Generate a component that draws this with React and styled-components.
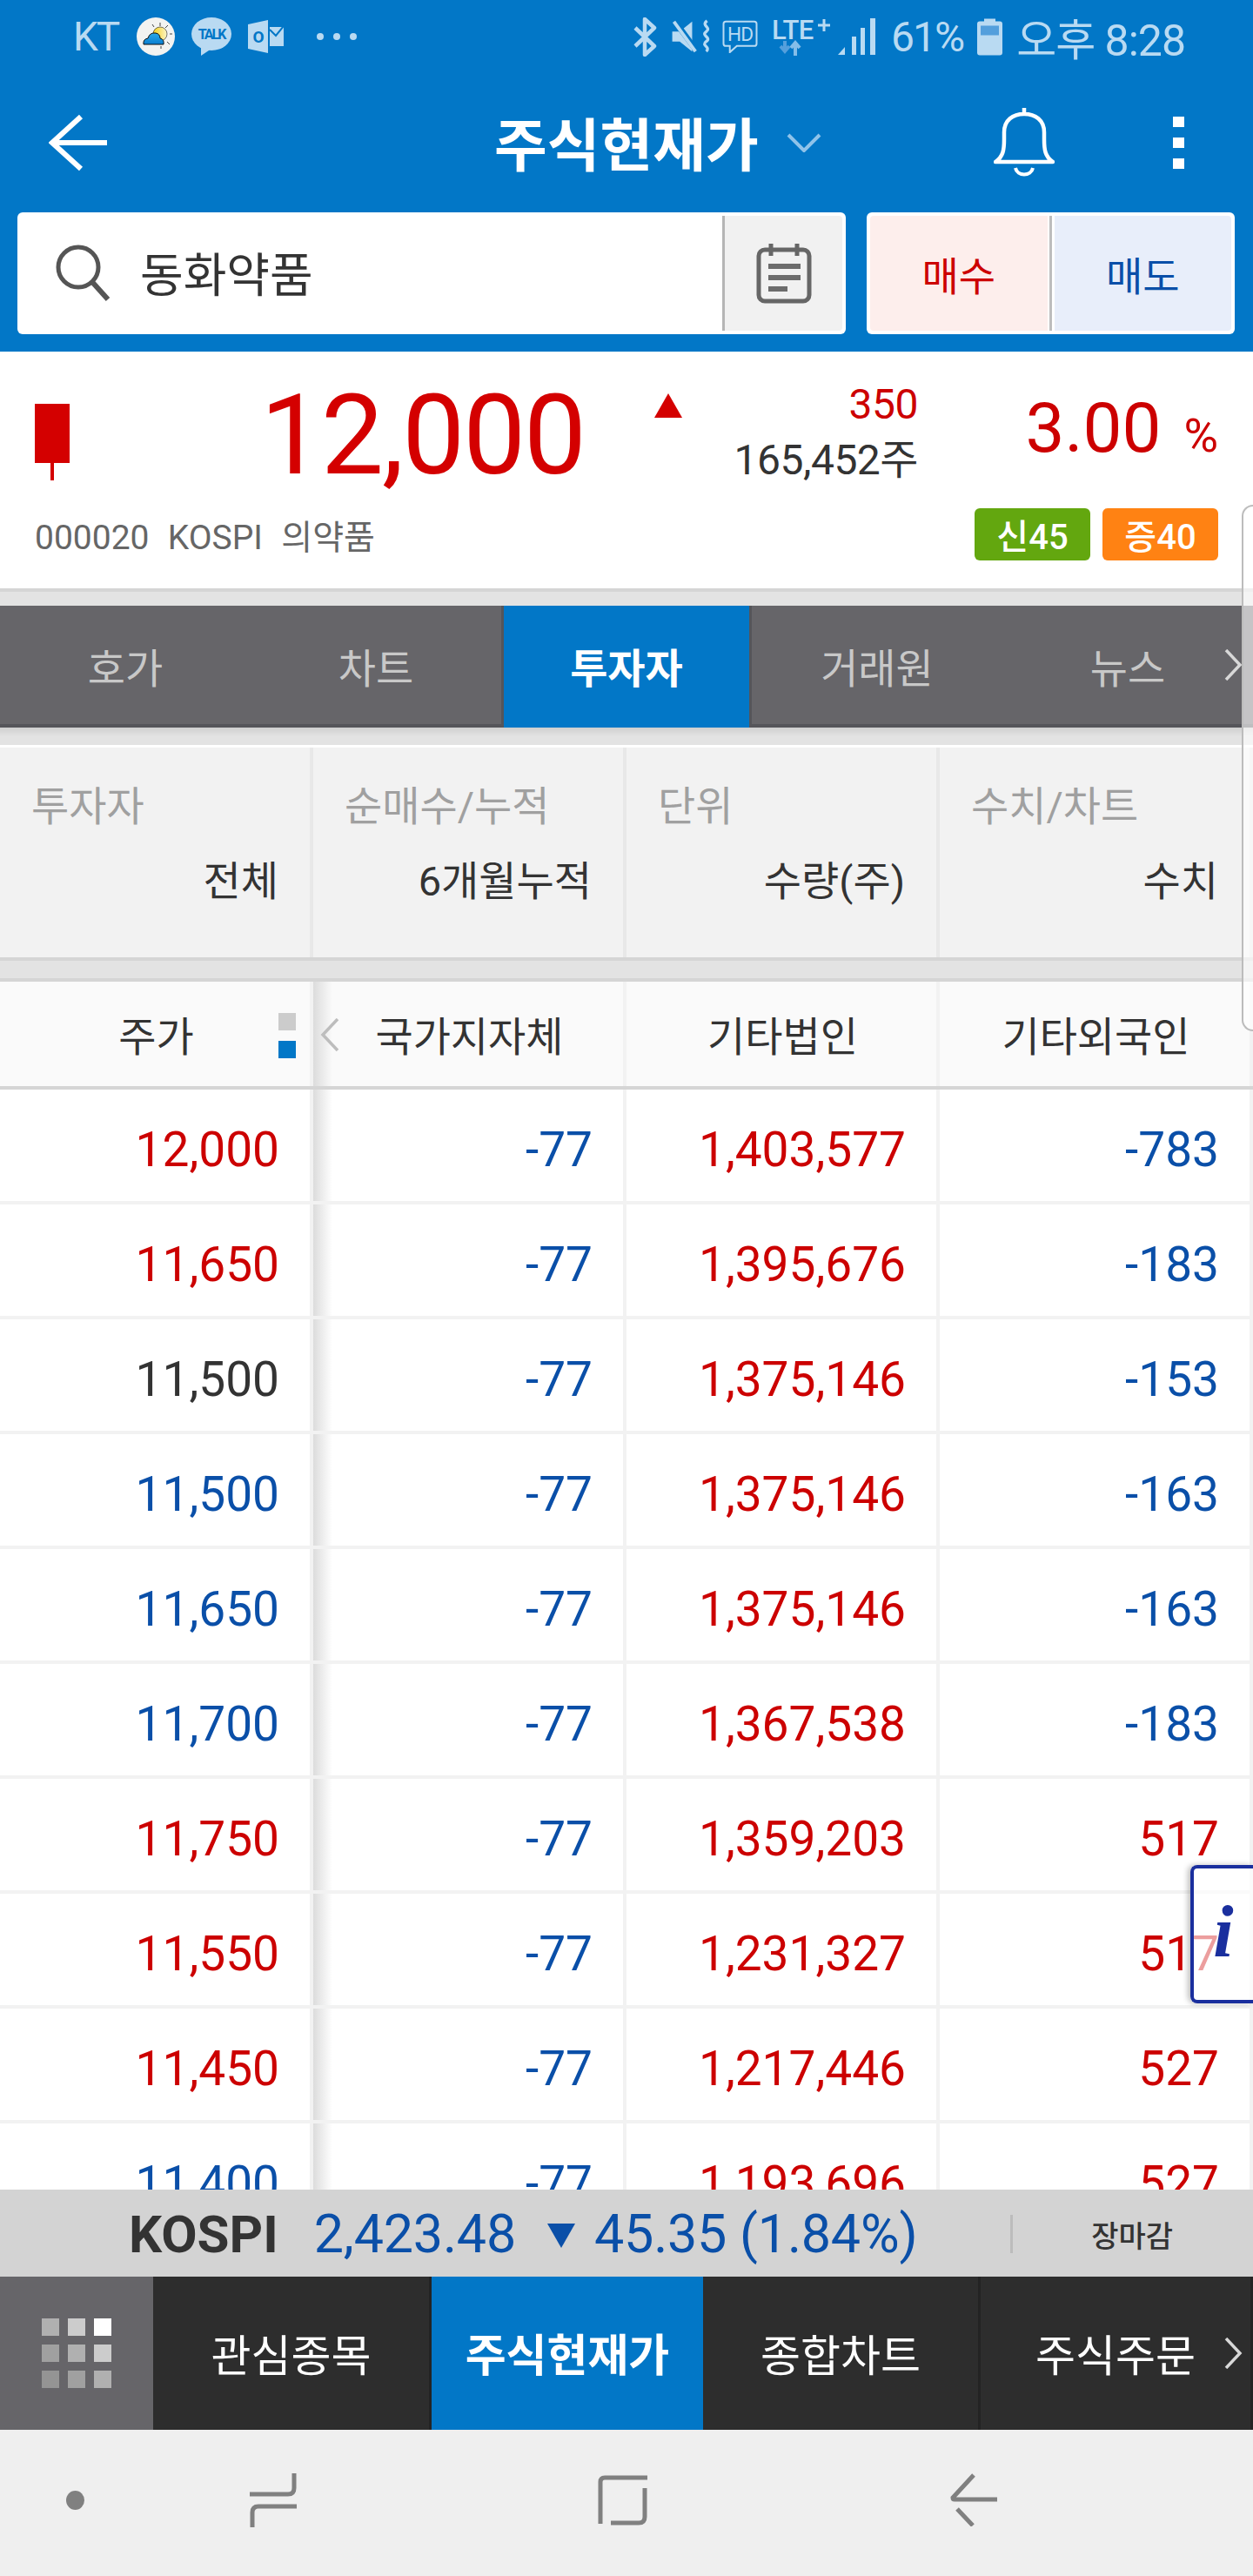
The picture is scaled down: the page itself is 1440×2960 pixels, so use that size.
import styled, { createGlobalStyle } from 'styled-components';

const RED = '#cc0000';
const BLUE = '#0a4fa8';
const DARK = '#333333';
const BRAND = '#0277c7';
const FONT = 'Roboto, "Noto Sans CJK KR", sans-serif';

const toneColor = (tone) => (tone === 'red' ? RED : tone === 'blue' ? BLUE : DARK);

const GlobalStyle = createGlobalStyle`
  html, body {
    margin: 0;
    padding: 0;
    background: #ffffff;
  }
  * {
    box-sizing: border-box;
  }
`;

const Page = styled.div`
  position: relative;
  width: 1440px;
  height: 2960px;
  overflow: hidden;
  display: flex;
  flex-direction: column;
  background: #ffffff;
  font-family: ${FONT};
`;

// Cabecera azul
const Header = styled.header`
  background: ${BRAND};
  height: 404px;
  flex: none;
`;

const StatusBar = styled.div`
  height: 84px;
  display: flex;
  align-items: center;
  justify-content: space-between;
  padding: 0 78px 0 84px;
  color: #b9daf2;
  font-size: 48px;
  letter-spacing: -2px;
`;

const StatusGroup = styled.div`
  display: flex;
  align-items: center;
`;

const StatusItem = styled.span`
  display: flex;
  align-items: center;
  margin-left: ${(p) => p.$ml || 0}px;
`;

const Carrier = styled.span`
  font-size: 46px;
`;

const ClockText = styled.span`
  font-size: 50px;
  letter-spacing: -1px;
`;

const MoreDots = styled.div`
  display: flex;
  gap: 11px;
`;

const MoreDot = styled.span`
  width: 8px;
  height: 8px;
  border-radius: 50%;
  background: #b9daf2;
`;

const TitleBar = styled.div`
  height: 160px;
  display: flex;
  align-items: center;
  padding-left: 56px;
`;

const Title = styled.h1`
  margin: 0 0 4px 445px;
  font-size: 66px;
  font-weight: 700;
  color: #ffffff;
  white-space: nowrap;
`;

const TitleChevron = styled.svg`
  margin-left: 32px;
`;

const BellIcon = styled.svg`
  margin-left: 198px;
`;

const MenuDots = styled.div`
  display: flex;
  flex-direction: column;
  gap: 12px;
  margin-left: 136px;
`;

const MenuDot = styled.span`
  width: 13px;
  height: 12px;
  background: #ffffff;
`;

const SearchRow = styled.div`
  height: 140px;
  display: flex;
  gap: 24px;
  padding-left: 20px;
`;

const SearchBox = styled.div`
  width: 952px;
  height: 140px;
  background: #ffffff;
  border-radius: 6px;
  padding: 4px;
  display: flex;
`;

const SearchField = styled.div`
  flex: 1;
  display: flex;
  align-items: center;
  gap: 33px;
  padding: 0 0 3px 38px;
  font-size: 54px;
  color: ${DARK};
`;

const CalendarCell = styled.div`
  width: 138px;
  border-left: 3px solid #b5b5b5;
  background: #f1f1f1;
  background-clip: padding-box;
  border-radius: 0 4px 4px 0;
  display: flex;
  align-items: center;
  justify-content: center;
`;

const TradeBox = styled.div`
  width: 423px;
  height: 140px;
  background: #ffffff;
  border-radius: 6px;
  padding: 4px;
  display: flex;
`;

const TradeButton = styled.div`
  flex: 1;
  display: flex;
  align-items: center;
  justify-content: center;
  font-size: 46px;
  color: ${(p) => (p.$side === 'buy' ? RED : BLUE)};
  background: ${(p) => (p.$side === 'buy' ? '#fdeeec' : '#e8eefa')};
  border-radius: ${(p) => (p.$side === 'buy' ? '4px 0 0 4px' : '0 4px 4px 0')};
`;

const TradeDivider = styled.div`
  width: 8px;
  background: linear-gradient(to right, #ffffff 2px, #bdbdbd 2px, #bdbdbd 5px, #ffffff 5px);
`;

// Resumen de precio
const Summary = styled.section`
  height: 272px;
  flex: none;
`;

const SummaryTop = styled.div`
  height: 180px;
  display: grid;
  grid-template-columns: 80px 592px 112px 274px 1fr;
  padding-right: 40px;
  align-items: start;
`;

const Candle = styled.div`
  margin: 60px 0 0 40px;
  width: 40px;
  height: 88px;
  background: linear-gradient(to right, transparent 18px, #d40000 18px, #d40000 22px, transparent 22px);

  &::before {
    content: '';
    display: block;
    height: 68px;
    background: #d40000;
  }
`;

const Price = styled.div`
  margin-top: 32px;
  font-size: 128px;
  line-height: 128px;
  color: #d40000;
  text-align: right;
  letter-spacing: -2px;
`;

const UpArrow = styled.div`
  justify-self: end;
  margin-top: 48px;
  width: 0;
  height: 0;
  border-left: 16px solid transparent;
  border-right: 16px solid transparent;
  border-bottom: 28px solid #d40000;
`;

const ChangeColumn = styled.div`
  margin-top: 37px;
  display: flex;
  flex-direction: column;
  gap: 16px;
  text-align: right;
  padding-right: 3px;
`;

const ChangeText = styled.div`
  font-size: 48px;
  line-height: 48px;
  color: ${(p) => toneColor(p.$tone)};
  letter-spacing: -0.5px;
`;

const Percent = styled.div`
  margin-top: 48px;
  font-size: 80px;
  line-height: 80px;
  color: ${RED};
  text-align: right;
  white-space: nowrap;
`;

const PercentSign = styled.span`
  font-size: 54px;
  margin-left: 26px;
`;

const SummaryBottom = styled.div`
  height: 60px;
  display: flex;
  align-items: center;
  justify-content: space-between;
  padding: 0 40px;
`;

const CodeLine = styled.div`
  font-size: 39px;
  color: #666666;
  white-space: pre;
  word-spacing: 1px;
`;

const BadgeRow = styled.div`
  display: flex;
  gap: 14px;
`;

const Badge = styled.span`
  width: 133px;
  height: 60px;
  border-radius: 6px;
  display: flex;
  align-items: center;
  justify-content: center;
  font-size: 40px;
  font-weight: 500;
  color: #ffffff;
  background: ${(p) => p.$bg};
`;

const Spacer = styled.div`
  height: ${(p) => p.$h}px;
  flex: none;
  background: ${(p) => p.$bg || '#e3e3e3'};
`;

// Pestañas
const TabBar = styled.nav`
  position: relative;
  height: 140px;
  flex: none;
  display: grid;
  grid-template-columns: repeat(5, 288px);
  background: #666569;
  border-bottom: 4px solid #55555a;
`;

const Tab = styled.div`
  display: flex;
  align-items: center;
  justify-content: center;
  padding-bottom: 4px;
  font-size: 47px;
  color: ${(p) => (p.$active ? '#ffffff' : '#c8c8c8')};
  font-weight: ${(p) => (p.$active ? 700 : 400)};
  background: ${(p) => (p.$active ? BRAND : 'transparent')};
  height: ${(p) => (p.$active ? '140px' : 'auto')};
  box-shadow: ${(p) => (p.$active ? 'inset 3px 0 0 #55555a, inset -3px 0 0 #55555a' : 'none')};
`;

const MoreChevron = styled.svg`
  position: absolute;
  right: 12px;
  top: 50%;
  transform: translateY(-50%);
`;

const TabShade = styled.div`
  height: 20px;
  flex: none;
  background: linear-gradient(to bottom, #cfcfcf, #e3e3e3 10px);
`;

// Filtros
const FilterPanel = styled.section`
  height: 241px;
  flex: none;
  display: grid;
  grid-template-columns: repeat(4, 360px);
  background: #f2f2f2;
`;

const FilterCell = styled.div`
  border-right: 4px solid #e8e8e8;
  padding: 40px 36px 0 36px;
  display: flex;
  flex-direction: column;
  gap: 30px;
`;

const FilterLabel = styled.div`
  font-size: 47px;
  line-height: 56px;
  color: #a0a0a0;
`;

const FilterValue = styled.div`
  font-size: 47px;
  line-height: 56px;
  color: ${DARK};
  text-align: right;
`;

// Tabla
const GridRow = styled.div`
  display: grid;
  grid-template-columns: repeat(4, 360px);
  height: ${(p) => p.$h}px;
  flex: none;
`;

const HeadCell = styled.div`
  position: relative;
  display: flex;
  align-items: center;
  justify-content: center;
  background: #fafafa;
  padding: 0 0 2px 3px;
  font-size: 47px;
  color: ${DARK};
  border-right: 4px solid #f2f2f2;
  ${(p) => p.$shaded && 'background: linear-gradient(to right, #dcdcdc, #fafafa 22px);'}
`;

const SortMarks = styled.div`
  position: absolute;
  left: 320px;
  top: 36px;
  display: flex;
  flex-direction: column;
  gap: 12px;
`;

const SortMark = styled.span`
  width: 20px;
  height: 20px;
  background: ${(p) => p.$color};
`;

const BackChevron = styled.svg`
  position: absolute;
  left: 8px;
  top: 42px;
`;

const Rows = styled.div`
  flex: none;
  height: 1264px;
  overflow: hidden;
`;

const DataRow = styled(GridRow)`
  border-bottom: 4px solid #f2f2f2;
`;

const DataCell = styled.div`
  display: flex;
  align-items: center;
  justify-content: flex-end;
  padding: 10px 35px 0 0;
  font-size: 55px;
  color: ${(p) => toneColor(p.$tone)};
  border-right: 4px solid #f2f2f2;
  ${(p) => p.$shaded && 'background: linear-gradient(to right, #dcdcdc, #ffffff 22px);'}
`;

// Barra de indice
const IndexBar = styled.div`
  height: 100px;
  flex: none;
  background: #d3d3d3;
  display: flex;
  align-items: center;
  padding: 2px 0 0 148px;
  font-size: 61px;
  color: ${BLUE};
  position: relative;
  letter-spacing: -0.2px;
`;

const IndexName = styled.strong`
  color: ${DARK};
  font-weight: 700;
  font-size: 60px;
  margin-right: 41px;
  letter-spacing: 0;
`;

const DownArrow = styled.span`
  width: 0;
  height: 0;
  margin: 4px 22px 0 36px;
  border-left: 16px solid transparent;
  border-right: 16px solid transparent;
  border-top: 28px solid ${BLUE};
`;

const IndexDivider = styled.span`
  width: 3px;
  height: 44px;
  background: #bcbcbc;
  margin-left: auto;
`;

const MarketState = styled.span`
  font-size: 34px;
  font-weight: 500;
  color: ${DARK};
  margin: 0 92px 0 90px;
  letter-spacing: 0;
`;

// Menu inferior
const BottomNav = styled.nav`
  position: relative;
  height: 176px;
  flex: none;
  display: grid;
  grid-template-columns: 176px 320px 312px 319px 313px;
  background: #2d2d2d;
`;

const GridButton = styled.div`
  background: #666569;
  display: grid;
  grid-template-columns: repeat(3, 20px);
  grid-auto-rows: 20px;
  gap: 10px;
  padding: 48px;
`;

const GridSquare = styled.span`
  background: ${(p) => p.$color};
`;

const NavItem = styled.div`
  display: flex;
  align-items: center;
  justify-content: center;
  padding-bottom: 2px;
  font-size: ${(p) => (p.$active ? 51 : 50)}px;
  color: #ffffff;
  font-weight: ${(p) => (p.$active ? 700 : 400)};
  background: ${(p) => (p.$active ? BRAND : 'transparent')};
  border-right: ${(p) => (p.$active ? 'none' : '3px solid #232323')};
`;

const AndroidBar = styled.div`
  height: 168px;
  flex: none;
  background: #efefef;
  padding-bottom: 7px;
  display: grid;
  grid-template-columns: 76px 211px 400px 405px 1fr;
  align-items: center;
`;

const HomeDot = styled.span`
  width: 21px;
  height: 22px;
  border-radius: 50%;
  background: #808080;
  grid-column: 1 / 3;
  margin-left: 76px;
`;

// Elementos flotantes
const EdgeHandle = styled.div`
  position: absolute;
  right: 0;
  top: 580px;
  width: 13px;
  height: 605px;
  border: 2px solid #bcbcbc;
  border-right: none;
  border-radius: 14px 0 0 14px;
  background: rgba(255, 255, 255, 0.62);
`;

const InfoButton = styled.div`
  position: absolute;
  right: 0;
  top: 2143px;
  width: 72px;
  height: 159px;
  padding-bottom: 6px;
  border: 4px solid #1a2f9e;
  border-right: none;
  border-radius: 8px 0 0 8px;
  background: rgba(255, 255, 255, 0.62);
  box-shadow: -3px 0 6px rgba(0, 0, 0, 0.25);
  display: flex;
  align-items: center;
  justify-content: center;
  font-family: "Liberation Serif", serif;
  font-style: italic;
  font-weight: 700;
  font-size: 84px;
  color: #1a2f9e;
`;

const WeatherIcon = () => (
  <svg width="44" height="44" viewBox="0 0 44 44">
    <defs>
      <linearGradient id="cloudFill" x1="0" y1="0" x2="0" y2="1">
        <stop offset="0" stopColor="#2aa8e8" />
        <stop offset="1" stopColor="#0a7ed0" />
      </linearGradient>
      <linearGradient id="sunFill" x1="0" y1="0" x2="1" y2="0">
        <stop offset="0" stopColor="#f3cf1a" />
        <stop offset="1" stopColor="#fff6c8" />
      </linearGradient>
    </defs>
    <circle cx="22" cy="22" r="22" fill="#f3f3f1" />
    <circle cx="27" cy="19" r="8" fill="url(#sunFill)" stroke="#222" strokeWidth="0.6" />
    <path d="M8 31q-1-6 5-7 2-7 9-6 5 1 5 6 5 1 4 7z" fill="url(#cloudFill)" stroke="#111" strokeWidth="1" />
    <path d="M27 6v4M36 9l-3 3M41 19h-3M35 28l3 3M28 33v3M18 8l2 3" stroke="#444" strokeWidth="1" />
  </svg>
);

const TalkIcon = () => (
  <svg width="48" height="44" viewBox="0 0 48 44">
    <ellipse cx="24" cy="19" rx="23" ry="19" fill="#b9daf2" />
    <path d="M12 32l0 12 12-8z" fill="#b9daf2" />
    <text x="24" y="25" textAnchor="middle" fontFamily="Roboto, sans-serif" fontWeight="700" fontSize="16" fill={BRAND}>TALK</text>
  </svg>
);

const OutlookIcon = () => (
  <svg width="41" height="38" viewBox="0 0 41 38">
    <path d="M0 5L23 0v38L0 33z" fill="#b9daf2" />
    <path d="M25 8h16v22H25z" fill="#b9daf2" />
    <path d="M25 11l7 7 9-11" fill="none" stroke={BRAND} strokeWidth="2" />
    <text x="11" y="26" textAnchor="middle" fontFamily="Roboto, sans-serif" fontWeight="700" fontSize="19" fill={BRAND}>O</text>
  </svg>
);

const BluetoothIcon = () => (
  <svg width="28" height="45" viewBox="0 0 28 45">
    <path d="M3 12l22 21-11 10V2l11 10L3 33" fill="none" stroke="#b9daf2" strokeWidth="4.500" strokeLinejoin="round" />
  </svg>
);

const MuteIcon = () => (
  <svg width="45" height="40" viewBox="0 0 46 42">
    <path d="M0 15h9L24 3v36L9 27H0z" fill="#b9daf2" />
    <path d="M2 1l28 38" stroke={BRAND} strokeWidth="7" />
    <path d="M2 3l26 36" stroke="#b9daf2" strokeWidth="4" />
    <path d="M42 2c-8 6 6 8-1 13s7 7 0 12 6 6 0 12" fill="none" stroke="#b9daf2" strokeWidth="3.500" />
  </svg>
);

const HdIcon = () => (
  <svg width="45" height="38" viewBox="0 0 46 42">
    <path d="M5 2h36q3 0 3 3v25q0 3-3 3H19l-9 8v-8H5q-3 0-3-3V5q0-3 3-3z" fill="none" stroke="#b9daf2" strokeWidth="2.200" />
    <text x="23" y="27" textAnchor="middle" fontFamily="Roboto, sans-serif" fontSize="25" fill="#b9daf2" letterSpacing="-1">HD</text>
  </svg>
);

const LteIcon = () => (
  <svg width="68" height="50" viewBox="0 -5 68 50">
    <text x="0" y="23" fontFamily="Roboto, sans-serif" fontWeight="500" fontSize="31" fill="#b9daf2" letterSpacing="-0.5">LTE</text>
    <path d="M53 7h14M60 0v14" stroke="#b9daf2" strokeWidth="3" />
    <path d="M15 25v11M10 31l5 6 5-6" fill="none" stroke="#549fdc" strokeWidth="4" />
    <path d="M27 42V28M22 33l5-6 5 6" fill="none" stroke="#85bde8" strokeWidth="4" />
  </svg>
);

const SignalIcon = () => (
  <svg width="43" height="42" viewBox="0 0 43 42">
    <path d="M0 42L8 33v9z" fill="#b9daf2" />
    <path d="M16 21h5v21h-5zM26 11h5v31h-5zM37 0h6v42h-6z" fill="#b9daf2" />
  </svg>
);

const BatteryIcon = () => (
  <svg width="29" height="43" viewBox="0 0 29 42">
    <path d="M8 0h13v3h5q3 0 3 3v33q0 3-3 3H3q-3 0-3-3V6q0-3 3-3h5z" fill="#b9daf2" />
    <path d="M4 8h21v11H4z" fill="#549fdc" />
  </svg>
);

const BackArrow = () => (
  <svg width="67" height="66" viewBox="0 0 67 66">
    <path d="M67 33H4M37 3L4 33l33 30" fill="none" stroke="#ffffff" strokeWidth="6" />
  </svg>
);

const SearchIcon = () => (
  <svg width="66" height="66" viewBox="0 0 66 66">
    <circle cx="28" cy="27" r="23" fill="none" stroke="#555" strokeWidth="5" />
    <path d="M44 44l18 20" stroke="#555" strokeWidth="6" />
  </svg>
);

const CalendarIcon = () => (
  <svg width="64" height="70" viewBox="0 0 64 70">
    <rect x="3" y="8" width="58" height="59" rx="7" fill="none" stroke="#666" strokeWidth="5" />
    <path d="M17 1v14M47 1v14" stroke="#666" strokeWidth="5" />
    <path d="M14 24h37v6H14zM14 37h37v6H14zM14 50h22v6H14z" fill="#6c6c6c" />
  </svg>
);

const rows = [
  ['12,000', 'red', '1,403,577', '-783', 'blue'],
  ['11,650', 'red', '1,395,676', '-183', 'blue'],
  ['11,500', 'dark', '1,375,146', '-153', 'blue'],
  ['11,500', 'blue', '1,375,146', '-163', 'blue'],
  ['11,650', 'blue', '1,375,146', '-163', 'blue'],
  ['11,700', 'blue', '1,367,538', '-183', 'blue'],
  ['11,750', 'red', '1,359,203', '517', 'red'],
  ['11,550', 'red', '1,231,327', '517', 'red'],
  ['11,450', 'red', '1,217,446', '527', 'red'],
  ['11,400', 'blue', '1,193,696', '527', 'red'],
];

const filters = [
  ['투자자', '전체'],
  ['순매수/누적', '6개월누적'],
  ['단위', '수량(주)'],
  ['수치/차트', '수치'],
];

const squares = ['#b0b0b0', '#cccccc', '#ffffff', '#a0a0a0', '#b0b0b0', '#cccccc', '#949494', '#a0a0a0', '#b0b0b0'];

const App = () => {
  return (
    <Page>
      <GlobalStyle />
      <Header>
        <StatusBar>
          <StatusGroup>
            <Carrier>KT</Carrier>
            <StatusItem $ml={21}><WeatherIcon /></StatusItem>
            <StatusItem $ml={18}><TalkIcon /></StatusItem>
            <StatusItem $ml={18}><OutlookIcon /></StatusItem>
            <StatusItem $ml={38}>
              <MoreDots>
                <MoreDot />
                <MoreDot />
                <MoreDot />
              </MoreDots>
            </StatusItem>
          </StatusGroup>
          <StatusGroup>
            <BluetoothIcon />
            <StatusItem $ml={17}><MuteIcon /></StatusItem>
            <StatusItem $ml={11}><HdIcon /></StatusItem>
            <StatusItem $ml={14}><LteIcon /></StatusItem>
            <StatusItem $ml={8}><SignalIcon /></StatusItem>
            <StatusItem $ml={18}>61%</StatusItem>
            <StatusItem $ml={16}><BatteryIcon /></StatusItem>
            <StatusItem $ml={16}><ClockText>오후 8:28</ClockText></StatusItem>
          </StatusGroup>
        </StatusBar>
        <TitleBar>
          <BackArrow />
          <Title>주식현재가</Title>
          <TitleChevron width="40" height="22" viewBox="0 0 40 22">
            <path d="M2 2l18 18L38 2" fill="none" stroke="#8fc3ea" strokeWidth="4" />
          </TitleChevron>
          <BellIcon width="70" height="80" viewBox="0 0 70 80">
            <path d="M35 0v7M2 62c9-6 10-14 10-26v-8c0-14 10-21 23-21s23 7 23 21v8c0 12 1 20 10 26z" fill="none" stroke="#fff" strokeWidth="4.500" strokeLinejoin="round" />
            <path d="M25 69c2 10 18 10 20 0" fill="none" stroke="#fff" strokeWidth="4" />
          </BellIcon>
          <MenuDots>
            <MenuDot />
            <MenuDot />
            <MenuDot />
          </MenuDots>
        </TitleBar>
        <SearchRow>
          <SearchBox>
            <SearchField>
              <SearchIcon />
              동화약품
            </SearchField>
            <CalendarCell>
              <CalendarIcon />
            </CalendarCell>
          </SearchBox>
          <TradeBox>
            <TradeButton $side="buy">매수</TradeButton>
            <TradeDivider />
            <TradeButton $side="sell">매도</TradeButton>
          </TradeBox>
        </SearchRow>
      </Header>

      <Summary>
        <SummaryTop>
          <Candle />
          <Price>12,000</Price>
          <UpArrow />
          <ChangeColumn>
            <ChangeText $tone="red">350</ChangeText>
            <ChangeText>165,452주</ChangeText>
          </ChangeColumn>
          <Percent>
            3.00<PercentSign>%</PercentSign>
          </Percent>
        </SummaryTop>
        <SummaryBottom>
          <CodeLine>000020  KOSPI  의약품</CodeLine>
          <BadgeRow>
            <Badge $bg="#63a70f">신45</Badge>
            <Badge $bg="#ff8213">증40</Badge>
          </BadgeRow>
        </SummaryBottom>
      </Summary>

      <Spacer $h={4} $bg="#d5d5d5" />
      <Spacer $h={16} />

      <TabBar>
        <Tab>호가</Tab>
        <Tab>차트</Tab>
        <Tab $active>투자자</Tab>
        <Tab>거래원</Tab>
        <Tab>뉴스</Tab>
        <MoreChevron width="21" height="36" viewBox="0 0 21 36">
          <path d="M2 1l16 17L2 35" fill="none" stroke="#d8d8d8" strokeWidth="3.500" />
        </MoreChevron>
      </TabBar>
      <TabShade />
      <Spacer $h={3} $bg="#ffffff" />

      <FilterPanel>
        {filters.map(([label, value]) => (
          <FilterCell key={label}>
            <FilterLabel>{label}</FilterLabel>
            <FilterValue>{value}</FilterValue>
          </FilterCell>
        ))}
      </FilterPanel>

      <Spacer $h={4} $bg="#d5d5d5" />
      <Spacer $h={20} />
      <Spacer $h={4} $bg="#d5d5d5" />

      <GridRow $h={120}>
        <HeadCell>
          주가
          <SortMarks>
            <SortMark $color="#cccccc" />
            <SortMark $color={BRAND} />
          </SortMarks>
        </HeadCell>
        <HeadCell $shaded>
          <BackChevron width="22" height="38" viewBox="0 0 22 38">
            <path d="M20 1L3 19l17 18" fill="none" stroke="#bdbdbd" strokeWidth="3.500" />
          </BackChevron>
          국가지자체
        </HeadCell>
        <HeadCell>기타법인</HeadCell>
        <HeadCell>기타외국인</HeadCell>
      </GridRow>
      <Spacer $h={4} $bg="#d5d5d5" />

      <Rows>
        {rows.map(([price, tone, corp, foreign, foreignTone], i) => (
          <DataRow key={i} $h={132}>
            <DataCell $tone={tone}>{price}</DataCell>
            <DataCell $tone="blue" $shaded>-77</DataCell>
            <DataCell $tone="red">{corp}</DataCell>
            <DataCell $tone={foreignTone}>{foreign}</DataCell>
          </DataRow>
        ))}
      </Rows>

      <IndexBar>
        <IndexName>KOSPI</IndexName>
        2,423.48
        <DownArrow />
        45.35 (1.84%)
        <IndexDivider />
        <MarketState>장마감</MarketState>
      </IndexBar>

      <BottomNav>
        <GridButton>
          {squares.map((color, i) => (
            <GridSquare key={i} $color={color} />
          ))}
        </GridButton>
        <NavItem>관심종목</NavItem>
        <NavItem $active>주식현재가</NavItem>
        <NavItem>종합차트</NavItem>
        <NavItem>주식주문</NavItem>
        <MoreChevron width="21" height="36" viewBox="0 0 21 36">
          <path d="M2 1l16 17L2 35" fill="none" stroke="#d8d8d8" strokeWidth="3.500" />
        </MoreChevron>
      </BottomNav>

      <AndroidBar>
        <HomeDot />
        <svg width="54" height="62" viewBox="0 0 54 62">
          <path d="M0 24h44q7 0 7-7V0M54 38H10q-7 0-7 7v17" fill="none" stroke="#808080" strokeWidth="5" />
        </svg>
        <svg width="58" height="58" viewBox="0 0 58 58">
          <path d="M3 56V8q0-5 5-5h49M54 15v33q0 7-7 7H15" fill="none" stroke="#808080" strokeWidth="5" />
        </svg>
        <svg width="54" height="61" viewBox="0 0 54 61">
          <path d="M27 2L3 28q0 2 2 2h49M8 41l18 19" fill="none" stroke="#808080" strokeWidth="5" />
        </svg>
      </AndroidBar>

      <EdgeHandle />
      <InfoButton>i</InfoButton>
    </Page>
  );
};

export default App;
